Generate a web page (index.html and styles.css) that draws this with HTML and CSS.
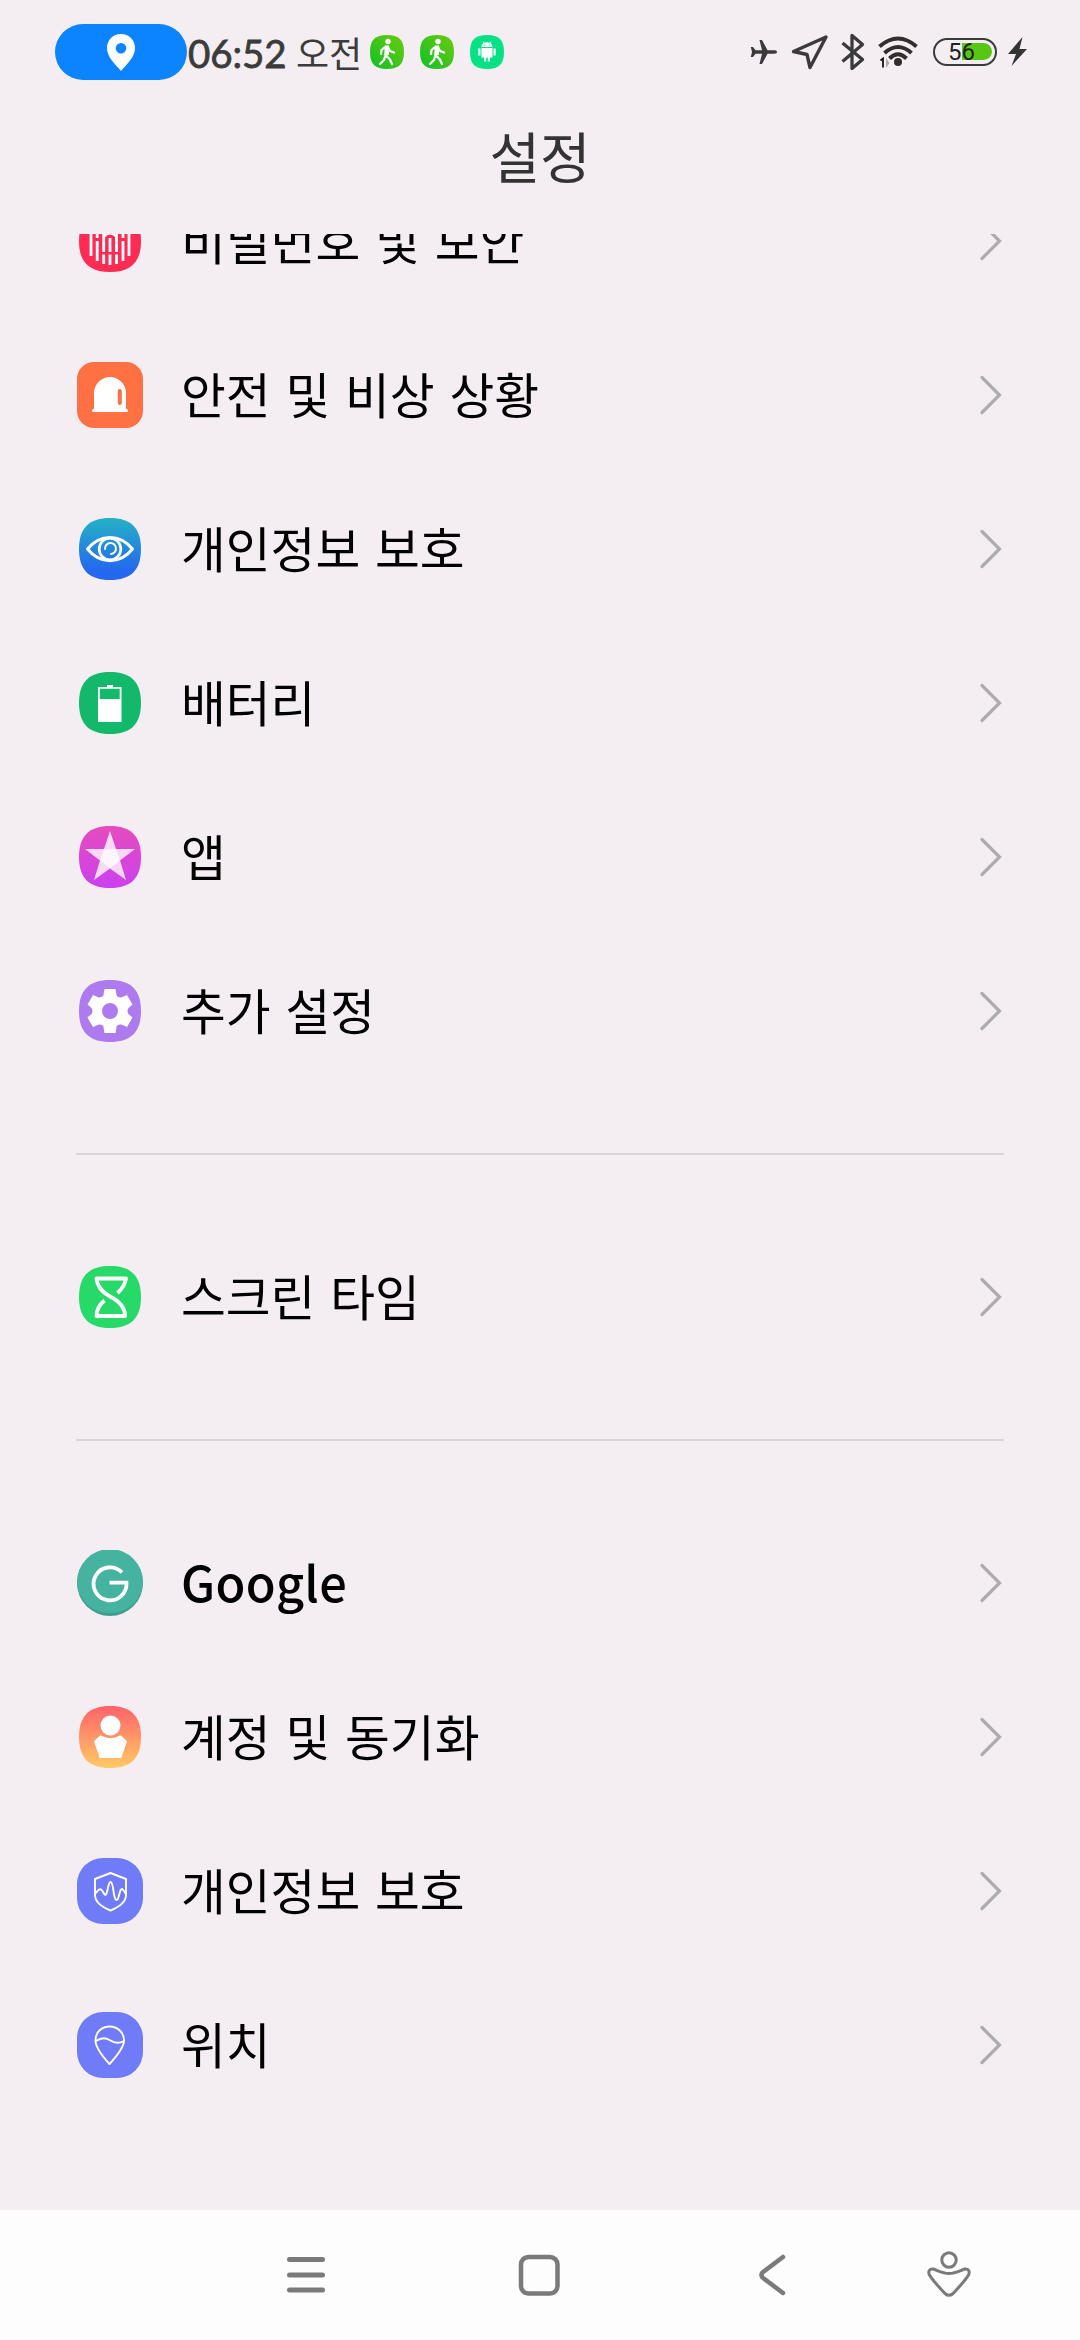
FILE: index.html
```html
<!DOCTYPE html>
<html lang="ko">
<head>
<meta charset="utf-8">
<title>설정</title>
<link rel="stylesheet" href="styles.css">
</head>
<body>
<svg class="defs" width="0" height="0">
  <defs>
    <linearGradient id="walkBg" x1="0" y1="1" x2="1" y2="0"><stop offset="0" stop-color="#0dc026"/><stop offset="1" stop-color="#6fca12"/></linearGradient>
    <linearGradient id="eyeBg" x1="0" y1="0" x2="0" y2="1"><stop offset="0" stop-color="#25b2c4"/><stop offset=".85" stop-color="#2468ee"/></linearGradient>
    <linearGradient id="starBg" x1="0" y1="0" x2="0" y2="1"><stop offset="0" stop-color="#e64cbd"/><stop offset="1" stop-color="#cb40ef"/></linearGradient>
    <linearGradient id="userBg" x1="0" y1="0" x2="0" y2="1"><stop offset="0" stop-color="#ff6369"/><stop offset="1" stop-color="#ffc966"/></linearGradient>
    <path id="squircle" d="M33 2C54 2 64 12 64 33S54 64 33 64S2 54 2 33S12 2 33 2Z"/>
    <symbol id="chevron" viewBox="0 0 24 40"><path d="M3 2.500L20.500 20L3 37.500" fill="none" stroke="#aeabae" stroke-width="3.200" stroke-linecap="round"/></symbol>
    <symbol id="walk" viewBox="0 0 34 34">
      <path fill="url(#walkBg)" d="M17 0C29 0 34 5 34 17S29 34 17 34S0 29 0 17S5 0 17 0Z"/>
      <circle cx="18" cy="6.500" r="2.700" fill="#fff"/>
      <path d="M16 12L15.500 20L20 24.500L22 29M15.500 20L14 25L10 29M15 12L11.500 15L11 19M18 12L20 16L24 17.500" fill="none" stroke="#fff" stroke-width="2.200" stroke-linecap="round" stroke-linejoin="round"/>
      <path d="M15 10.500L19 10.500L19 20L14.500 20Z" fill="#fff"/>
    </symbol>
  </defs>
</svg>

<header class="status">
  <div class="status-left">
    <span class="pill"><svg width="28" height="37" viewBox="0 0 28 37"><path fill="#fff" fill-rule="evenodd" d="M14 0C6 0 0 6 0 14C0 23 8 30 14 37C20 30 28 23 28 14C28 6 22 0 14 0ZM14 9A5.300 5.300 0 1 1 14 19.600A5.300 5.300 0 1 1 14 9Z"/></svg></span>
    <span class="clock">06:52</span><span class="ampm">오전</span>
    <span class="notes">
      <svg width="34" height="34"><use href="#walk"/></svg>
      <svg width="34" height="34"><use href="#walk"/></svg>
      <svg width="34" height="34" viewBox="0 0 34 34"><path fill="#05e285" d="M17 0C29 0 34 5 34 17S29 34 17 34S0 29 0 17S5 0 17 0Z"/><path fill="#fff" d="M11.500 12C11.500 5.800 22.500 5.800 22.500 12ZM11.500 13H22.500V22.500H20V26.500H17.800V22.500H16.200V26.500H14V22.500H11.500ZM8.300 13.500H10.500V20.500H8.300ZM23.500 13.500H25.700V20.500H23.500Z"/><path d="M13 6.500L14.500 9M21 6.500L19.500 9" stroke="#fff" stroke-width=".8"/><circle cx="14.700" cy="10" r=".6" fill="#05e285"/><circle cx="19.300" cy="10" r=".6" fill="#05e285"/></svg>
    </span>
  </div>
  <div class="status-right">
    <svg class="i-plane" width="28" height="26" viewBox="0 0 28 26"><path fill="#3a3a3a" d="M27 13C27 14.200 26 14.700 24 14.700H17.500L12 25H9.500L12 14.700H5.500L3 18H.8L2 13L.8 8H3L5.500 11.300H12L9.500 1H12L17.500 11.300H24C26 11.300 27 11.800 27 13Z"/></svg>
    <svg class="i-nav" width="38" height="37" viewBox="0 0 38 37"><path d="M35 3L2.500 17.500L16 20.500L19 33.500Z" fill="none" stroke="#3a3a3a" stroke-width="3.400" stroke-linejoin="round"/></svg>
    <svg class="i-bt" width="26" height="38" viewBox="0 0 26 38"><path d="M2.500 10L22.500 26.500L12 35.500V2.500L22.500 11.500L2.500 28.500" fill="none" stroke="#3a3a3a" stroke-width="3.300" stroke-linejoin="round"/></svg>
    <svg class="i-wifi" width="40" height="32" viewBox="0 0 40 32"><g fill="none" stroke="#332d2c" stroke-width="4"><path d="M1.500 10.500Q20-5.500 38.500 10.500"/><path d="M6.500 17Q20 5 33.500 17"/><path d="M11.500 22.500Q20 14 28.500 22.500"/></g><circle cx="20" cy="26" r="4" fill="#332d2c"/><path d="M2.500 24.500L5 22.500V31.500" fill="none" stroke="#111" stroke-width="1.800"/><path d="M8 22V32L11.500 27Z" fill="#aaa"/></svg>
    <span class="battery"><span class="charge"></span><span class="pct">56</span></span>
    <svg class="i-bolt" width="19" height="30" viewBox="0 0 19 30"><path fill="#333" d="M14.500 0L0 17H8L3.500 29L19 12H11.500Z"/></svg>
  </div>
</header>

<h1 class="title">설정</h1>

<main class="list">
  <div class="row">
    <svg class="icon" viewBox="0 0 66 66"><use href="#squircle" fill="#fd2c55"/><g stroke="#fff" stroke-width="2.800" fill="none"><path d="M14 20V48M20.200 20V30M20.200 33V53M26.700 24V44M26.700 46.500V56M33 30V44M33 46.500V57M39.500 24V44M39.500 46.500V56M46 20V30M46 33V53M52 20V48"/><path d="M26.700 29Q33 22 39.500 29" stroke-width="2"/></g></svg>
    <span class="label">비밀번호 및 보안</span>
    <svg class="chev"><use href="#chevron"/></svg>
  </div>
  <div class="row">
    <svg class="icon" viewBox="0 0 66 66"><rect width="66" height="66" rx="17" fill="#ff7043"/><path fill="#fff" fill-rule="evenodd" d="M17 46.500V31A16 16 0 0 1 49 31V46.500Q51 47 51 49Q51 50 50 50H16Q15 50 15 49Q15 47 17 46.500ZM42.800 27A2 2 0 0 0 40.800 29V41A2 2 0 0 0 42.800 43A2 2 0 0 0 44.800 41V29A2 2 0 0 0 42.800 27Z"/></svg>
    <span class="label">안전 및 비상 상황</span>
    <svg class="chev"><use href="#chevron"/></svg>
  </div>
  <div class="row">
    <svg class="icon" viewBox="0 0 66 66"><use href="#squircle" fill="url(#eyeBg)"/><g fill="none" stroke="#fff" stroke-linecap="round" stroke-linejoin="round"><path d="M10.500 33C23 17.500 43 17.500 55.500 33C43 48.500 23 48.500 10.500 33Z" stroke-width="3"/><circle cx="33" cy="33" r="10.800" stroke-width="2.700"/><path d="M28 33A5.500 5.500 0 1 1 34 38" stroke-width="2"/></g></svg>
    <span class="label">개인정보 보호</span>
    <svg class="chev"><use href="#chevron"/></svg>
  </div>
  <div class="row">
    <svg class="icon" viewBox="0 0 66 66"><use href="#squircle" fill="#13b96b"/><path fill="#fff" fill-rule="evenodd" d="M30 15H36V17H44.500V52H21V17H30ZM22.800 18.800V29H42.700V18.800Z"/></svg>
    <span class="label">배터리</span>
    <svg class="chev"><use href="#chevron"/></svg>
  </div>
  <div class="row">
    <svg class="icon" viewBox="0 0 66 66"><use href="#squircle" fill="url(#starBg)"/><path fill="#fff" fill-opacity=".8" d="M33 7L39 25H58L43 36.500L49 56L33 44.500L17 56L23 36.500L8 25H27Z"/><path fill="#fff" fill-opacity=".75" d="M27 25H39L43 36.500L33 44.500L23 36.500Z"/></svg>
    <span class="label">앱</span>
    <svg class="chev"><use href="#chevron"/></svg>
  </div>
  <div class="row">
    <svg class="icon" viewBox="0 0 66 66"><use href="#squircle" fill="#ae7bef"/><path fill="#fff" fill-rule="evenodd" d="M27.500 11H38.500L39.700 18Q43 20.500 46.500 18.500L50 17L55.500 26.500L51.500 30Q49.500 33 51.500 36L55.500 39.500L50 49L46.500 47.500Q43 45.500 39.700 48L38.500 55H27.500L26.300 48Q23 45.500 19.500 47.500L16 49L10.500 39.500L14.500 36Q16.500 33 14.500 30L10.500 26.500L16 17L19.500 18.500Q23 20.500 26.300 18ZM33 25A8 8 0 1 0 33 41A8 8 0 1 0 33 25Z"/></svg>
    <span class="label">추가 설정</span>
    <svg class="chev"><use href="#chevron"/></svg>
  </div>
  <hr class="divider">
  <div class="row">
    <svg class="icon" viewBox="0 0 66 66"><use href="#squircle" fill="#27d968"/><path d="M40.500 29C45 25 48 21 49 14.500H19.500C20 21 23 27 33 32.500C43 37.500 48 44 48 52H19.500C19.500 46 22 41 27.500 36.500" fill="none" stroke="#fff" stroke-width="3.800" stroke-linejoin="round"/></svg>
    <span class="label">스크린 타임</span>
    <svg class="chev"><use href="#chevron"/></svg>
  </div>
  <hr class="divider">
  <div class="row">
    <svg class="icon" viewBox="0 0 66 66"><circle cx="33" cy="33" r="33" fill="#3f9e8b"/><path d="M0 32A33 33 0 0 1 66 32C65 51 50 63 33 63S1 51 0 32Z" fill="#45b39f"/><path d="M45 22.500A16.500 16.500 0 1 0 49.500 32.700H32.500" fill="none" stroke="#fff" stroke-width="3.800"/></svg>
    <span class="label latin">Google</span>
    <svg class="chev"><use href="#chevron"/></svg>
  </div>
  <div class="row">
    <svg class="icon" viewBox="0 0 66 66"><use href="#squircle" fill="url(#userBg)"/><circle cx="33.500" cy="21.500" r="10" fill="#fff"/><path fill="#fff" stroke="#fff" stroke-width="2" stroke-linejoin="round" d="M23.500 32.500Q33.500 38 43.500 32.500L49 37.500L43.500 53H23.500L18 37.500Z"/></svg>
    <span class="label">계정 및 동기화</span>
    <svg class="chev"><use href="#chevron"/></svg>
  </div>
  <div class="row">
    <svg class="icon" viewBox="0 0 66 66"><rect width="66" height="66" rx="26" fill="#707bf8"/><g fill="none" stroke="#fff" stroke-width="1.900" stroke-linejoin="round"><path d="M33.500 15L49 21V37C49 44 42 49 33.500 52.500C25 49 18 44 18 37V21Z"/><path d="M18 36C20.500 33 22 30 24 31.500C26.500 33.500 27.500 38 29 36.500C31 34 31 24 33.500 24C37 24 36 42 39.500 42C42.500 42 42 31 45 31C46.500 31 47 34 49 36"/></g></svg>
    <span class="label">개인정보 보호</span>
    <svg class="chev"><use href="#chevron"/></svg>
  </div>
  <div class="row">
    <svg class="icon" viewBox="0 0 66 66"><rect width="66" height="66" rx="26" fill="#707bf8"/><g fill="none" stroke="#fff" stroke-width="1.900" stroke-linejoin="round"><path d="M32.500 52C27 46 18.500 36 18.500 28.500C18.500 20 25 14.500 32.500 14.500S47 20 47 28.500C47 36 38 46 32.500 52Z"/><path d="M19 29C24 25.500 28 25 32.500 28S42 32 47 29"/></g></svg>
    <span class="label">위치</span>
    <svg class="chev"><use href="#chevron"/></svg>
  </div>
</main>

<nav class="navbar">
  <svg width="50" height="50" viewBox="0 0 50 50"><path d="M8.500 9.500H41.500M8.500 25H41.500M8.500 40H41.500" stroke="#7a7a7a" stroke-width="5" stroke-linecap="round"/></svg>
  <svg width="50" height="50" viewBox="0 0 50 50"><rect x="7" y="7" width="36.500" height="36.500" rx="7.500" fill="none" stroke="#7a7a7a" stroke-width="4.500"/></svg>
  <svg width="50" height="50" viewBox="0 0 50 50"><path d="M36 7L15.500 22.500Q13.500 25 15.500 27.500L36 43" fill="none" stroke="#7a7a7a" stroke-width="4.500" stroke-linecap="round" stroke-linejoin="round"/></svg>
  <svg class="assist" width="50" height="50" viewBox="0 0 50 50"><g fill="none" stroke="#7a7a7a" stroke-width="3"><circle cx="25" cy="10" r="7.200"/><path d="M9 19C13 20 18 23.500 25 23.500S37 20 41 19C45 18.500 46 22 44.500 25C41 31 35 37 29 43.500Q25 47 21 43.500C15 37 9 31 5.500 25C4 22 5 18.500 9 19Z"/></g></svg>
</nav>
</body>
</html>
```

FILE: styles.css
```css
* { box-sizing: border-box; }
body {
  margin: 0;
  width: 1080px;
  height: 2340px;
  display: flex;
  flex-direction: column;
  overflow: hidden;
  background: #f4eef3;
  color: #000;
  font-family: "Noto Sans CJK KR", "Noto Sans", sans-serif;
}
svg { display: block; flex: none; }

.status {
  flex: none;
  height: 104px;
  padding: 0 53px 0 55px;
  display: flex;
  justify-content: space-between;
  align-items: center;
}
.status-left, .status-right, .notes { display: flex; align-items: center; }
.pill {
  width: 132px;
  height: 56px;
  border-radius: 28px;
  background: #0c84ff;
  display: flex;
  align-items: center;
  justify-content: center;
}
.clock {
  width: 109px;
  padding: 1px 0 0 1px;
  font: 400 38.500px/56px Lato, sans-serif;
  letter-spacing: -0.100px;
  -webkit-text-stroke: 0.800px #3b3b3b;
  color: #3b3b3b;
}
.ampm {
  width: 74px;
  font-size: 36px;
  line-height: 52px;
  color: #3b3b3b;
}
.notes { gap: 16px; }
.i-nav { margin-left: 13px; }
.i-bt { margin-left: 11px; }
.i-wifi { margin-left: 12px; }
.battery {
  position: relative;
  width: 64px;
  height: 28px;
  margin-left: 15px;
  border: 2.500px solid #3a3a3a;
  border-radius: 14px;
}
.charge {
  position: absolute;
  top: 3px;
  right: 3px;
  width: 30px;
  height: 17px;
  border-radius: 0 9px 9px 0;
  background: #57c713;
}
.pct {
  position: absolute;
  left: 13px;
  top: 0;
  font: 400 24px/25px Roboto, sans-serif;
  color: #222;
}
.i-bolt { margin-left: 11px; }

.title {
  flex: none;
  height: 130px;
  margin: 0;
  text-align: center;
  font-size: 55px;
  font-weight: 400;
  line-height: 101px;
  color: #333;
}

.list {
  flex: 1;
  min-height: 0;
  overflow: hidden;
  padding: 0 76px 0 77px;
  display: flex;
  flex-direction: column;
}
.row {
  flex: none;
  height: 154px;
  display: flex;
  align-items: center;
}
.row:first-child { margin-top: -70px; }
.icon { width: 66px; height: 66px; }
.label {
  flex: 1;
  margin-left: 38px;
  padding-bottom: 4px;
  font-size: 48.700px;
  line-height: 72px;
  word-spacing: 1.200px;
  white-space: nowrap;
}
.latin { font-weight: 500; letter-spacing: 0.300px; }
.chev { width: 24px; height: 40px; margin-right: 1px; }
.divider {
  flex: none;
  width: 928px;
  height: 2px;
  margin: 65px 0 65px -1px;
  border: 0;
  background: #dad4d9;
}

.navbar {
  flex: none;
  height: 130px;
  padding-left: 281px;
  display: flex;
  align-items: center;
  gap: 183px;
  background: #fdfdfd;
}
.assist { margin-left: -56px; }
```
